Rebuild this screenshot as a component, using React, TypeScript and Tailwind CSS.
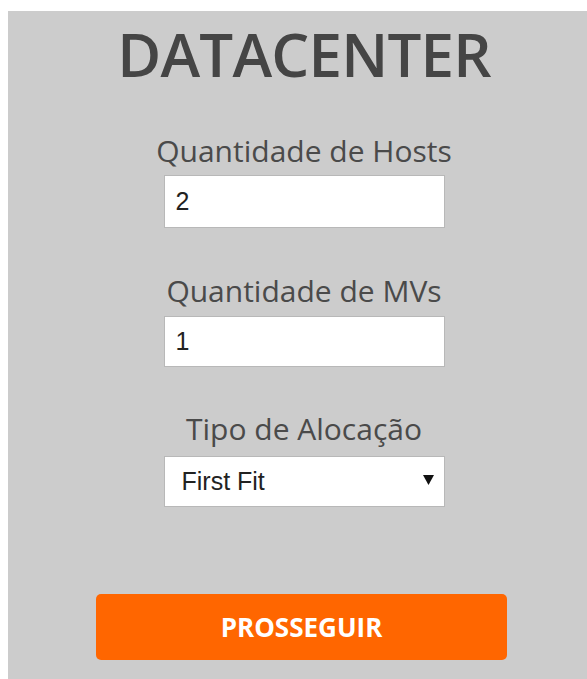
import React from "react";

const sans = { fontFamily: '"Open Sans", "Noto Sans", sans-serif' };

export default function App() {
  return (
    <div className="w-[587px] h-[679px] overflow-hidden bg-white pl-[8px] pt-[11px]">
      <div
        className="w-[592px] h-[700px] bg-[#cccccc] flex flex-col items-center pt-[13px]"
        style={sans}
      >
        <h1 className="text-[60px] leading-none font-semibold text-[#454545] font-['Open_Sans',sans-serif] tracking-[-0.8px]">
          DATACENTER
        </h1>

        <label className="mt-[52px] text-[30px] leading-none text-[#4a4a4a] font-['Open_Sans',sans-serif]">
          Quantidade de Hosts
        </label>
        <input
          type="text"
          defaultValue="2"
          className="mt-[9px] w-[281px] h-[53px] bg-white border border-[#b8b8b8] px-[11px] text-[25px] text-[#222222] font-['Liberation_Sans',Arial,sans-serif] outline-none"
        />

        <label className="mt-[48px] text-[30px] leading-none text-[#4a4a4a] font-['Open_Sans',sans-serif]">
          Quantidade de MVs
        </label>
        <input
          type="text"
          defaultValue="1"
          className="mt-[10px] w-[281px] h-[51px] bg-white border border-[#b8b8b8] px-[11px] text-[25px] text-[#222222] font-['Liberation_Sans',Arial,sans-serif] outline-none"
        />

        <label className="mt-[47px] text-[30px] leading-none text-[#4a4a4a] font-['Open_Sans',sans-serif]">
          Tipo de Alocação
        </label>
        <div className="relative mt-[12px] w-[281px] h-[51px]">
          <select
            defaultValue="first"
            className="appearance-none w-full h-full bg-white border border-[#b8b8b8] pl-[17px] pr-[30px] text-[25px] text-[#222222] font-['Liberation_Sans',Arial,sans-serif] outline-none"
          >
            <option value="first">First Fit</option>
            <option value="best">Best Fit</option>
            <option value="worst">Worst Fit</option>
          </select>
          <svg
            className="absolute right-[11px] top-[19px] pointer-events-none"
            width="11"
            height="10"
            viewBox="0 0 11 10"
          >
            <path d="M0 0 H11 L5.5 10 Z" fill="#111111" />
          </svg>
        </div>

        <button
          type="button"
          className="mt-[87px] w-[411px] h-[66px] rounded-[5px] bg-[#ff6600] text-white text-[26px] font-bold font-['Open_Sans',sans-serif] leading-none -ml-[5px]"
        >
          PROSSEGUIR
        </button>
      </div>
    </div>
  );
}
